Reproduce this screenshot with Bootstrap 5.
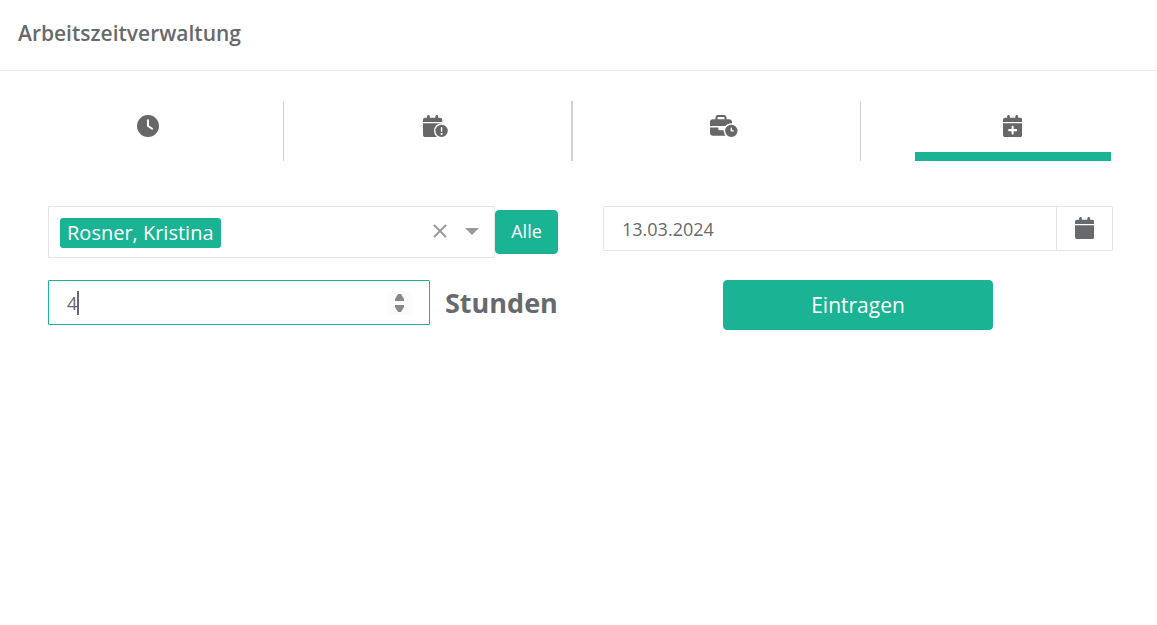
<!DOCTYPE html>
<html lang="de">
<head>
<meta charset="utf-8">
<meta name="viewport" content="width=device-width, initial-scale=1">
<title>Arbeitszeitverwaltung</title>
<link rel="stylesheet" href="https://cdn.jsdelivr.net/npm/bootstrap@5.3.0/dist/css/bootstrap.min.css">
<style>
  :root { --brand: #1ab394; --ink: #676a6c; --line: #e5e6e7; }
  body { font-family: "Open Sans", "Noto Sans", sans-serif; font-size: 18px; color: var(--ink); background: #fff; }
  .page-head { padding: 16px 18px 20px; border-bottom: 1px solid #e7eaec; }
  .page-head h1 { font-size: 21px; line-height: 34px; font-weight: 600; }
  .tab-strip { padding: 30px 0 0 4px; }
  .tab-cell { height: 60px; border-right: 1px solid #d1d1d1; }
  .tab-cell.wide-line { border-right-width: 2px; }
  .tab-cell.last-cell { border-right: 0; }
  .tab-btn { width: 72%; height: 60px; padding: 0 0 10px; border: 0; background: none; color: #676767; }
  .tab-btn.active { padding-bottom: 1px; border-bottom: 9px solid var(--brand); }
  .glyph { display: block; height: 22px; fill: currentColor; }
  .entry-form { padding: 45px 44px 0 48px; }
  .entry-grid { --bs-gutter-x: 45px; --bs-gutter-y: 22px; }
  .field { border: 1px solid var(--line); border-radius: 1px; background: #fff; }
  .bare { border: 0; outline: 0; background: none; color: inherit; padding: 0; min-width: 0; }
  .people { height: 52px; padding: 0 14px 0 11px; }
  .people input { width: 0; }
  .tag { background: var(--brand); color: #fff; font-size: 20px; line-height: 30px; padding: 0 7px; border-radius: 3px; margin-top: 2px; }
  .people svg { display: block; }
  .people button { padding-bottom: 2px; }
  .btn-brand { --bs-btn-bg: var(--brand); --bs-btn-border-color: var(--brand); --bs-btn-color: #fff;
    --bs-btn-hover-bg: #18a689; --bs-btn-hover-border-color: #18a689; --bs-btn-hover-color: #fff;
    --bs-btn-border-radius: 4px; }
  .btn-all { width: 63px; height: 44px; padding: 0 0 2px; font-size: 18px; }
  .btn-submit { width: 270px; height: 50px; padding: 2px 0 0; font-size: 21px; }
  .date-field, .hours-field { height: 45px; }
  .date-field input { padding: 2px 0 0 18px; }
  .date-btn { width: 56px; padding-bottom: 2px; border-left: 1px solid var(--line); }
  .hours-field { border-color: var(--brand); padding: 0 18px; }
  .hours-field input { padding-top: 2px; appearance: textfield; -moz-appearance: textfield; caret-color: transparent; }
  .hours-field input::-webkit-inner-spin-button { -webkit-appearance: none; margin: 0; }
  .caret-bar { position: absolute; left: 28px; top: 10px; width: 2px; height: 24px; background: var(--ink); }
  .spinner { width: 23px; height: 24px; padding: 2px 0; background: #fbfbfb; }
  .spinner button, .spinner svg { display: block; height: 8px; line-height: 1; }
  .hours-unit { font-size: 27px; line-height: 45px; font-weight: 700; width: 128px; padding-left: 15px; }
</style>
<script src="https://cdn.jsdelivr.net/npm/bootstrap@5.3.0/dist/js/bootstrap.bundle.min.js"></script>
</head>
<body>
<header class="page-head"><h1 class="m-0">Arbeitszeitverwaltung</h1></header>

<main>
  <nav class="tab-strip" aria-label="Bereiche">
    <div class="row g-0" role="tablist">
      <div class="col-3 px-2"><div class="tab-cell d-flex justify-content-center">
        <button class="tab-btn d-flex align-items-center justify-content-center" type="button" role="tab" aria-label="Zeiten">
          <svg class="glyph" viewBox="0 0 512 512"><path fill-rule="evenodd" d="M256 0a256 256 0 1 1 0 512A256 256 0 1 1 256 0zM232 120V256c0 8 4 15.500 10.700 20l96 64c11 7.400 25.900 4.400 33.300-6.700s4.400-25.900-6.700-33.300L280 243.200V120c0-13.300-10.700-24-24-24s-24 10.700-24 24z"/></svg>
        </button></div></div>
      <div class="col-3 px-2"><div class="tab-cell wide-line d-flex justify-content-center">
        <button class="tab-btn d-flex align-items-center justify-content-center" type="button" role="tab" aria-label="Fehlzeiten">
          <svg class="glyph" viewBox="0 0 576 512">
            <mask id="cut"><rect width="576" height="512" fill="#fff"/><circle cx="432" cy="368" r="176" fill="#000"/></mask>
            <path mask="url(#cut)" d="M96 32V64H48C21.500 64 0 85.500 0 112v48H448V112c0-26.500-21.500-48-48-48H352V32c0-17.700-14.300-32-32-32s-32 14.300-32 32V64H160V32c0-17.700-14.300-32-32-32S96 14.300 96 32zM448 192H0V464c0 26.500 21.500 48 48 48H400c26.500 0 48-21.500 48-48V192z"/>
            <path fill-rule="evenodd" d="M576 368a144 144 0 1 0-288 0 144 144 0 1 0 288 0zM432 280c8.800 0 16 7.200 16 16v80c0 8.800-7.200 16-16 16s-16-7.200-16-16v-80c0-8.800 7.200-16 16-16zM408 440a24 24 0 1 1 48 0 24 24 0 1 1-48 0z"/>
          </svg>
        </button></div></div>
      <div class="col-3 px-2"><div class="tab-cell d-flex justify-content-center">
        <button class="tab-btn d-flex align-items-center justify-content-center" type="button" role="tab" aria-label="Arbeitszeiten">
          <svg class="glyph" viewBox="0 0 640 512"><path fill-rule="evenodd" d="M184 48H328c4.400 0 8 3.600 8 8V96H176V56c0-4.400 3.600-8 8-8zM128 56V96H64C28.700 96 0 124.700 0 160v96H360.200c32.300-39.100 81.100-64 135.800-64c5.400 0 10.700 .2 16 .7V160c0-35.300-28.700-64-64-64H384V56c0-30.900-25.100-56-56-56H184c-30.900 0-56 25.100-56 56zM320 352H224c-17.700 0-32-14.300-32-32V288H0V416c0 35.300 28.700 64 64 64H360.200C335.100 449.600 320 410.500 320 368c0-5.400 .2-10.700 .7-16zM640 368a144 144 0 1 0-288 0 144 144 0 1 0 288 0zM496 288c8.800 0 16 7.200 16 16v48h32c8.800 0 16 7.200 16 16s-7.200 16-16 16H496c-8.800 0-16-7.200-16-16V304c0-8.800 7.200-16 16-16z"/></svg>
        </button></div></div>
      <div class="col-3 px-2"><div class="tab-cell last-cell d-flex justify-content-center">
        <button class="tab-btn active d-flex align-items-center justify-content-center" type="button" role="tab" aria-selected="true" aria-label="Zeit eintragen">
          <svg class="glyph" viewBox="0 0 448 512"><path fill-rule="evenodd" d="M96 32V64H48C21.500 64 0 85.500 0 112v48H448V112c0-26.500-21.500-48-48-48H352V32c0-17.700-14.300-32-32-32s-32 14.300-32 32V64H160V32c0-17.700-14.300-32-32-32S96 14.300 96 32zM448 192H0V464c0 26.500 21.500 48 48 48H400c26.500 0 48-21.500 48-48V192zM224 248c13.300 0 24 10.700 24 24v56h56c13.300 0 24 10.700 24 24s-10.700 24-24 24H248v56c0 13.300-10.700 24-24 24s-24-10.700-24-24V376H144c-13.300 0-24-10.700-24-24s10.700-24 24-24h56V272c0-13.300 10.700-24 24-24z"/></svg>
        </button></div></div>
    </div>
  </nav>

  <form class="entry-form">
    <div class="row entry-grid">
      <div class="col-6 d-flex align-items-center">
        <div class="field people flex-fill d-flex align-items-center">
          <span class="tag text-nowrap">Rosner, Kristina</span>
          <input class="bare flex-fill" type="text" role="combobox" aria-expanded="false" aria-label="Mitarbeiter">
          <button class="bare me-3" type="button" aria-label="Auswahl löschen"><svg width="16" height="16" viewBox="0 0 16 16" fill="none" stroke="#999" stroke-width="2"><path d="M2 2l12 12M14 2L2 14"/></svg></button>
          <button class="bare" type="button" aria-label="Liste öffnen"><svg width="16" height="8" viewBox="0 0 16 8" fill="#999"><path d="M1 1h14L8 8z"/></svg></button>
        </div>
        <button class="btn btn-brand btn-all flex-shrink-0" type="button">Alle</button>
      </div>
      <div class="col-6">
        <div class="field date-field d-flex">
          <input class="bare flex-fill" type="text" value="13.03.2024" aria-label="Datum">
          <button class="bare date-btn d-flex align-items-center justify-content-center" type="button" aria-label="Kalender öffnen">
            <svg class="glyph" viewBox="0 0 448 512"><path d="M96 32V64H48C21.500 64 0 85.500 0 112v48H448V112c0-26.500-21.500-48-48-48H352V32c0-17.700-14.300-32-32-32s-32 14.300-32 32V64H160V32c0-17.700-14.300-32-32-32S96 14.300 96 32zM448 192H0V464c0 26.500 21.500 48 48 48H400c26.500 0 48-21.500 48-48V192z"/></svg>
          </button>
        </div>
      </div>
      <div class="col-6 d-flex align-items-start">
        <div class="field hours-field position-relative flex-fill d-flex align-items-center">
          <input class="bare flex-fill" type="number" id="hours" value="4">
          <span class="caret-bar"></span>
          <div class="spinner d-flex flex-column align-items-center justify-content-between">
            <button class="bare" type="button" tabindex="-1" aria-label="Mehr"><svg width="11" height="8" viewBox="0 0 11 8" fill="#898989"><path d="M4 1h3l3 5v2H1V6z"/></svg></button>
            <button class="bare" type="button" tabindex="-1" aria-label="Weniger"><svg width="11" height="8" viewBox="0 0 11 8" fill="#898989"><path d="M4 7h3l3-5V0H1v2z"/></svg></button>
          </div>
        </div>
        <label class="hours-unit flex-shrink-0" for="hours">Stunden</label>
      </div>
      <div class="col-6 text-center">
        <button class="btn btn-brand btn-submit" type="submit">Eintragen</button>
      </div>
    </div>
  </form>
</main>
</body>
</html>
